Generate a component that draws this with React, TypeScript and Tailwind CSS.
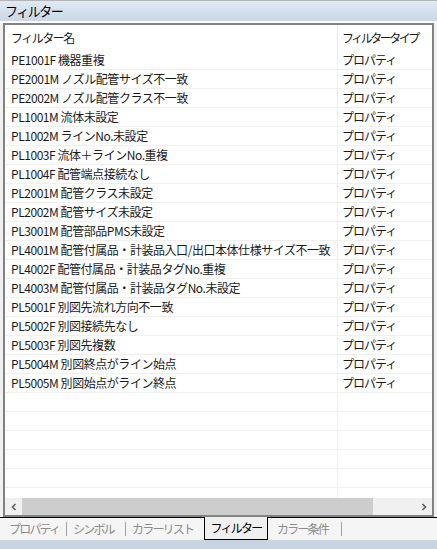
const filters = [
	"PE1001F 機器重複",
	"PE2001M ノズル配管サイズ不一致",
	"PE2002M ノズル配管クラス不一致",
	"PL1001M 流体未設定",
	"PL1002M ラインNo.未設定",
	"PL1003F 流体＋ラインNo.重複",
	"PL1004F 配管端点接続なし",
	"PL2001M 配管クラス未設定",
	"PL2002M 配管サイズ未設定",
	"PL3001M 配管部品PMS未設定",
	"PL4001M 配管付属品・計装品入口/出口本体仕様サイズ不一致",
	"PL4002F 配管付属品・計装品タグNo.重複",
	"PL4003M 配管付属品・計装品タグNo.未設定",
	"PL5001F 別図先流れ方向不一致",
	"PL5002F 別図接続先なし",
	"PL5003F 別図先複数",
	"PL5004M 別図終点がライン始点",
	"PL5005M 別図始点がライン終点",
];

function Row({ name, type }: { name: string; type: string }) {
	return (
		<div className="flex h-[19px] shrink-0 border-b border-[#f0f0f0]">
			<div className="w-[333px] shrink-0 overflow-hidden whitespace-nowrap border-r border-[#f0f0f0] pl-[6px] leading-[18px]">
				{name}
			</div>
			<div className="flex-1 whitespace-nowrap pl-[4px] leading-[18px] tracking-[-1px]">{type}</div>
		</div>
	);
}

export default function App() {
	return (
		<div
			className="flex h-[549px] w-[437px] flex-col overflow-hidden bg-[#f0f0f0] text-[12px] tracking-[-0.45px] text-[#1a1a1a]"
			style={{ fontFamily: '"Noto Sans CJK JP", "Noto Sans", sans-serif' }}
		>
			<div className="flex h-[21px] shrink-0 items-center border-t border-[#b4b4b4] bg-gradient-to-b from-[#e1e9f3] to-[#c9d7e6] pl-[5px] text-[13px] tracking-[-1.5px] text-black">
				フィルター
			</div>
			<div className="h-[2px] shrink-0 bg-white" />

			<div className="ml-[3px] mr-[3px] flex h-[494px] shrink-0 flex-col border-2 border-[#828282] bg-white">
				<div className="flex h-[26px] shrink-0 items-center whitespace-nowrap">
					<div className="flex h-full w-[333px] shrink-0 items-center border-r border-[#ececec] pl-[6px] tracking-[-1.5px]">
						フィルター名
					</div>
					<div className="pl-[4px] tracking-[-2.5px]">フィルタータイプ</div>
				</div>

				<div className="flex flex-1 flex-col overflow-hidden">
					{filters.map((f) => (
						<Row key={f} name={f} type="プロパティ" />
					))}
					{Array.from({ length: 8 }).map((_, i) => (
						<Row key={i} name="" type="" />
					))}
				</div>

				<div className="flex h-[17px] shrink-0 items-center bg-[#f0f0f0]">
					<div className="flex w-[17px] justify-center">
						<svg width="8" height="8" viewBox="0 0 8 8">
							<path d="M5.5 1 L2.5 4 L5.5 7" fill="none" stroke="#606060" strokeWidth="1.6" />
						</svg>
					</div>
					<div className="h-[17px] w-[351px] bg-[#cdcdcd]" />
					<div className="flex-1" />
					<div className="flex w-[17px] justify-center">
						<svg width="8" height="8" viewBox="0 0 8 8">
							<path d="M2.5 1 L5.5 4 L2.5 7" fill="none" stroke="#606060" strokeWidth="1.6" />
						</svg>
					</div>
				</div>
			</div>

			<div className="flex h-[23px] shrink-0 items-stretch whitespace-nowrap bg-[#f5f5f5] tracking-[-1.8px]">
				<div className="flex w-[204px] items-center border-t border-black pl-[9px] text-[#8c8c8c]">
					<span className="w-[57px]">プロパティ</span>
					<span className="h-[14px] w-px bg-[#a0a0a0]" />
					<span className="w-[58px] pl-[6px]">シンボル</span>
					<span className="h-[14px] w-px bg-[#a0a0a0]" />
					<span className="pl-[6px]">カラーリスト</span>
				</div>
				<div className="flex w-[64px] items-center justify-center border-x border-b border-black bg-[#f0f0f0] text-black">
					フィルター
				</div>
				<div className="flex flex-1 items-center border-t border-black pl-[9px] text-[#8c8c8c]">
					カラー条件
					<span className="ml-[13px] h-[14px] w-px bg-[#a0a0a0]" />
				</div>
			</div>
			<div className="flex-1 bg-[#c8d4e1]" />
		</div>
	);
}
